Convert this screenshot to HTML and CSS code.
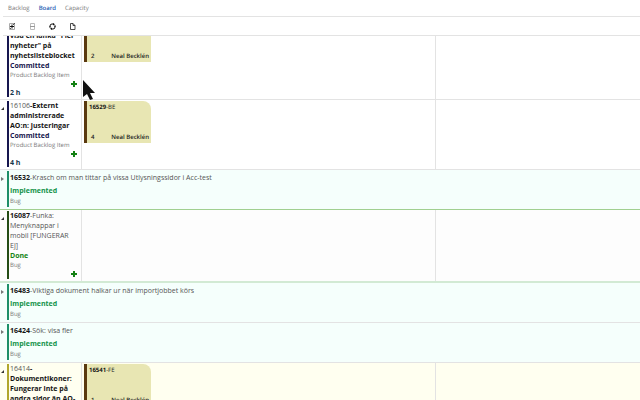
FILE: index.html
```html
<!DOCTYPE html>
<html lang="sv">
<head>
  <meta charset="UTF-8" />
  <meta name="viewport" content="width=device-width, initial-scale=1.0" />
  <title>Board</title>
  <link rel="stylesheet" href="styles.css">
</head>
<body>
<nav class="tabs">
  <a href="#backlog">Backlog</a>
  <a href="#board" class="active">Board</a>
  <a href="#capacity">Capacity</a>
</nav>

<div class="toolbar">
  <button type="button" aria-label="Expand all">
    <svg viewBox="0 0 7 7"><path d="M.5 .5h5v6h-5z" fill="none" stroke="#aaa"/><path d="M1 3.5h4M3 1.500v4" stroke="#111" fill="none"/><path d="M4 2l2-2M1 6l1-1" stroke="#555" fill="none"/></svg>
  </button>
  <button type="button" aria-label="Collapse all">
    <svg viewBox="0 0 7 7"><path d="M1.5 .5h4v6h-4z" fill="none" stroke="#bbb"/><path d="M1 3.5h5" stroke="#999"/></svg>
  </button>
  <button type="button" aria-label="Refresh">
    <svg viewBox="0 0 7 7"><path d="M1 4V3a2 2 0 0 1 2-2h1.5M6 3V4a2 2 0 0 1-2 2H2.5" fill="none" stroke="#111"/><path d="M4 0v2.500L6 1.200zM3 7V4.500L1 5.800zM0 3.500h2L1 5.200zM5 3.500h2L6 1.800z" fill="#111"/></svg>
  </button>
  <button type="button" aria-label="New item">
    <svg viewBox="0 0 7 7"><path d="M1.500 .5h2.500l2 2v4H1.500zM4 .5v2h2" fill="none" stroke="#222" stroke-width=".8"/></svg>
  </button>
</div>

<main class="board">
  <section class="row first">
    <span></span>
    <div class="item navy">
      <h2><b>visa en länka "Fler nyheter" på nyhetslisteblocket</b></h2>
      <p class="state">Committed</p>
      <p class="type">Product Backlog Item</p>
      <button type="button" class="add" aria-label="Add task"></button>
      <p class="hours">2 h</p>
    </div>
    <div class="cell">
      <article class="card">
        <footer><span>2</span><span>Neal Becklén</span></footer>
      </article>
    </div>
    <div class="cell"></div>
  </section>

  <section class="row">
    <button type="button" class="toggle open" aria-label="Collapse"></button>
    <div class="item navy">
      <h2>16106<b>-Externt administrerade AO:n: justeringar</b></h2>
      <p class="state">Committed</p>
      <p class="type">Product Backlog Item</p>
      <button type="button" class="add" aria-label="Add task"></button>
      <p class="hours">4 h</p>
    </div>
    <div class="cell">
      <article class="card">
        <p><b>16529</b>-BE</p>
        <footer><span>4</span><span>Neal Becklén</span></footer>
      </article>
    </div>
    <div class="cell"></div>
  </section>

  <section class="row closed before-done">
    <button type="button" class="toggle" aria-label="Expand"></button>
    <div class="item teal">
      <h2><b>16532</b>-Krasch om man tittar på vissa Utlysningssidor i Acc-test</h2>
      <p class="state">Implemented</p>
      <p class="type">Bug</p>
    </div>
  </section>

  <section class="row done">
    <button type="button" class="toggle open" aria-label="Collapse"></button>
    <div class="item moss">
      <h2><b>16087</b>-Funka: Menyknappar i mobil [FUNGERAR EJ]</h2>
      <p class="state">Done</p>
      <p class="type">Bug</p>
      <button type="button" class="add" aria-label="Add task"></button>
    </div>
    <div class="cell"></div>
    <div class="cell"></div>
  </section>

  <section class="row closed">
    <button type="button" class="toggle" aria-label="Expand"></button>
    <div class="item teal">
      <h2><b>16483</b>-Viktiga dokument halkar ur när importjobbet körs</h2>
      <p class="state">Implemented</p>
      <p class="type">Bug</p>
    </div>
  </section>

  <section class="row closed">
    <button type="button" class="toggle" aria-label="Expand"></button>
    <div class="item teal">
      <h2><b>16424</b>-Sök: visa fler</h2>
      <p class="state">Implemented</p>
      <p class="type">Bug</p>
    </div>
  </section>

  <section class="row yellow">
    <button type="button" class="toggle open" aria-label="Collapse"></button>
    <div class="item olive">
      <h2>16414<b>- Dokumentikoner: Fungerar inte på andra sidor än AO-</b></h2>
    </div>
    <div class="cell">
      <article class="card">
        <p><b>16541</b>-FE</p>
        <footer><span>1</span><span>Neal Becklén</span></footer>
      </article>
    </div>
    <div class="cell"></div>
  </section>
</main>

<svg class="pointer" viewBox="0 0 12 20"><path d="M0 0v17l4-3 3 6 3-1-3-6h5z" fill="#111"/></svg>
</body>
</html>
```
FILE: styles.css
```css
* {
  box-sizing: border-box;
}

body {
  margin: 0;
  height: 100vh;
  display: flex;
  flex-direction: column;
  overflow: hidden;
  background: #fff;
  color: #222;
  font-family: "Open Sans", "Noto Sans", sans-serif;
  font-size: 7px;
  line-height: 10px;
}

h2, p {
  margin: 0;
  font-size: 7px;
  font-weight: normal;
}

b {
  color: #151515;
  font-weight: 700;
}

button {
  padding: 0;
  border: 0;
  background: none;
}

.tabs {
  display: flex;
  gap: 9px;
  height: 17px;
  margin-left: 3px;
  padding: 3px 5px;
  border-bottom: 1px solid #e3e3e3;
  font-size: 6px;
  text-rendering: geometricPrecision;
}

.tabs a {
  color: #777;
  text-decoration: none;
}

.tabs .active {
  color: #2b62b5;
  font-weight: 600;
}

.toolbar {
  display: flex;
  align-items: center;
  gap: 13px;
  height: 19px;
  margin-left: 3px;
  padding-left: 6px;
  border-bottom: 1px solid #e3e3e3;
}

.toolbar button {
  width: 7px;
  height: 7px;
}

.toolbar svg {
  display: block;
  width: 7px;
  height: 7px;
}

.board {
  flex: 1;
  overflow: hidden;
}

.row {
  display: grid;
  grid-template-columns: 7px 74px 19fr 11fr;
  min-height: 70px;
  border-bottom: 1px solid #e3e3e3;
}

/* scrolled half out of view */
.first {
  grid-template-rows: 63px;
  min-height: 0;
  overflow: hidden;
}

.first .item {
  align-self: end;
}

.toggle {
  width: 3px;
  height: 4px;
  margin: 7px 0 0 1px;
  background: #777;
  clip-path: polygon(0 0, 100% 50%, 0 100%);
}

.toggle.open {
  height: 3px;
  background: #333;
  clip-path: polygon(100% 0, 100% 100%, 0 100%);
}

.item {
  display: flex;
  flex-direction: column;
  margin: 1px 0 2px;
  padding: 0 4px 0 1px;
  border-left: 2px solid;
}

.navy {
  border-color: #16164f;
}

.teal {
  border-color: #1d8f68;
}

.moss {
  border-color: #244d16;
}

.olive {
  border-color: #b0a62c;
}

.item h2 {
  color: #555;
}

.state {
  color: #15154c;
  font-weight: 700;
}

.item .type {
  color: #777;
  font-size: 6px;
  line-height: 8px;
  text-rendering: geometricPrecision;
}

.add {
  align-self: flex-end;
  width: 6px;
  height: 6px;
  margin: 2px 0 1px;
  background:
    linear-gradient(#138013, #138013) center / 6px 2px no-repeat,
    linear-gradient(#138013, #138013) center / 2px 6px no-repeat;
}

.hours {
  color: #16384d;
  font-weight: 700;
  line-height: 9px;
}

.cell {
  padding: 1px 2px;
  border-left: 1px solid #e3e3e3;
}

.card {
  display: flex;
  flex-direction: column;
  justify-content: space-between;
  width: 67px;
  height: 42px;
  padding: 1px 2px;
  border-left: 3px solid #5a3910;
  border-top-right-radius: 8px;
  background: #e8e6b3;
  font-size: 6px;
  text-rendering: geometricPrecision;
}

.card p {
  font-size: 6px;
}

.card footer {
  display: flex;
  justify-content: space-between;
  padding-left: 2px;
  font-weight: 600;
  line-height: 9px;
}

.first .cell {
  padding-top: 0;
}

.first .card {
  justify-content: flex-end;
  height: 26px;
  border-top-right-radius: 0;
}

.closed {
  grid-template-columns: 7px 1fr;
  min-height: 40px;
  background: #f5fffc;
}

.closed h2 {
  line-height: 14px;
}

.closed .state {
  color: #14934b;
  line-height: 11px;
}

.closed .item .type {
  line-height: 10px;
}

.before-done {
  border-bottom-color: #a0d090;
}

.done {
  min-height: 73px;
  border-bottom: 2px solid #d2ead4;
  background: #fdfdfd;
}

.done .state {
  color: #158515;
}

.yellow {
  background: #fffff0;
}

.pointer {
  position: absolute;
  left: 83px;
  top: 80px;
  width: 12px;
  height: 20px;
}
```
